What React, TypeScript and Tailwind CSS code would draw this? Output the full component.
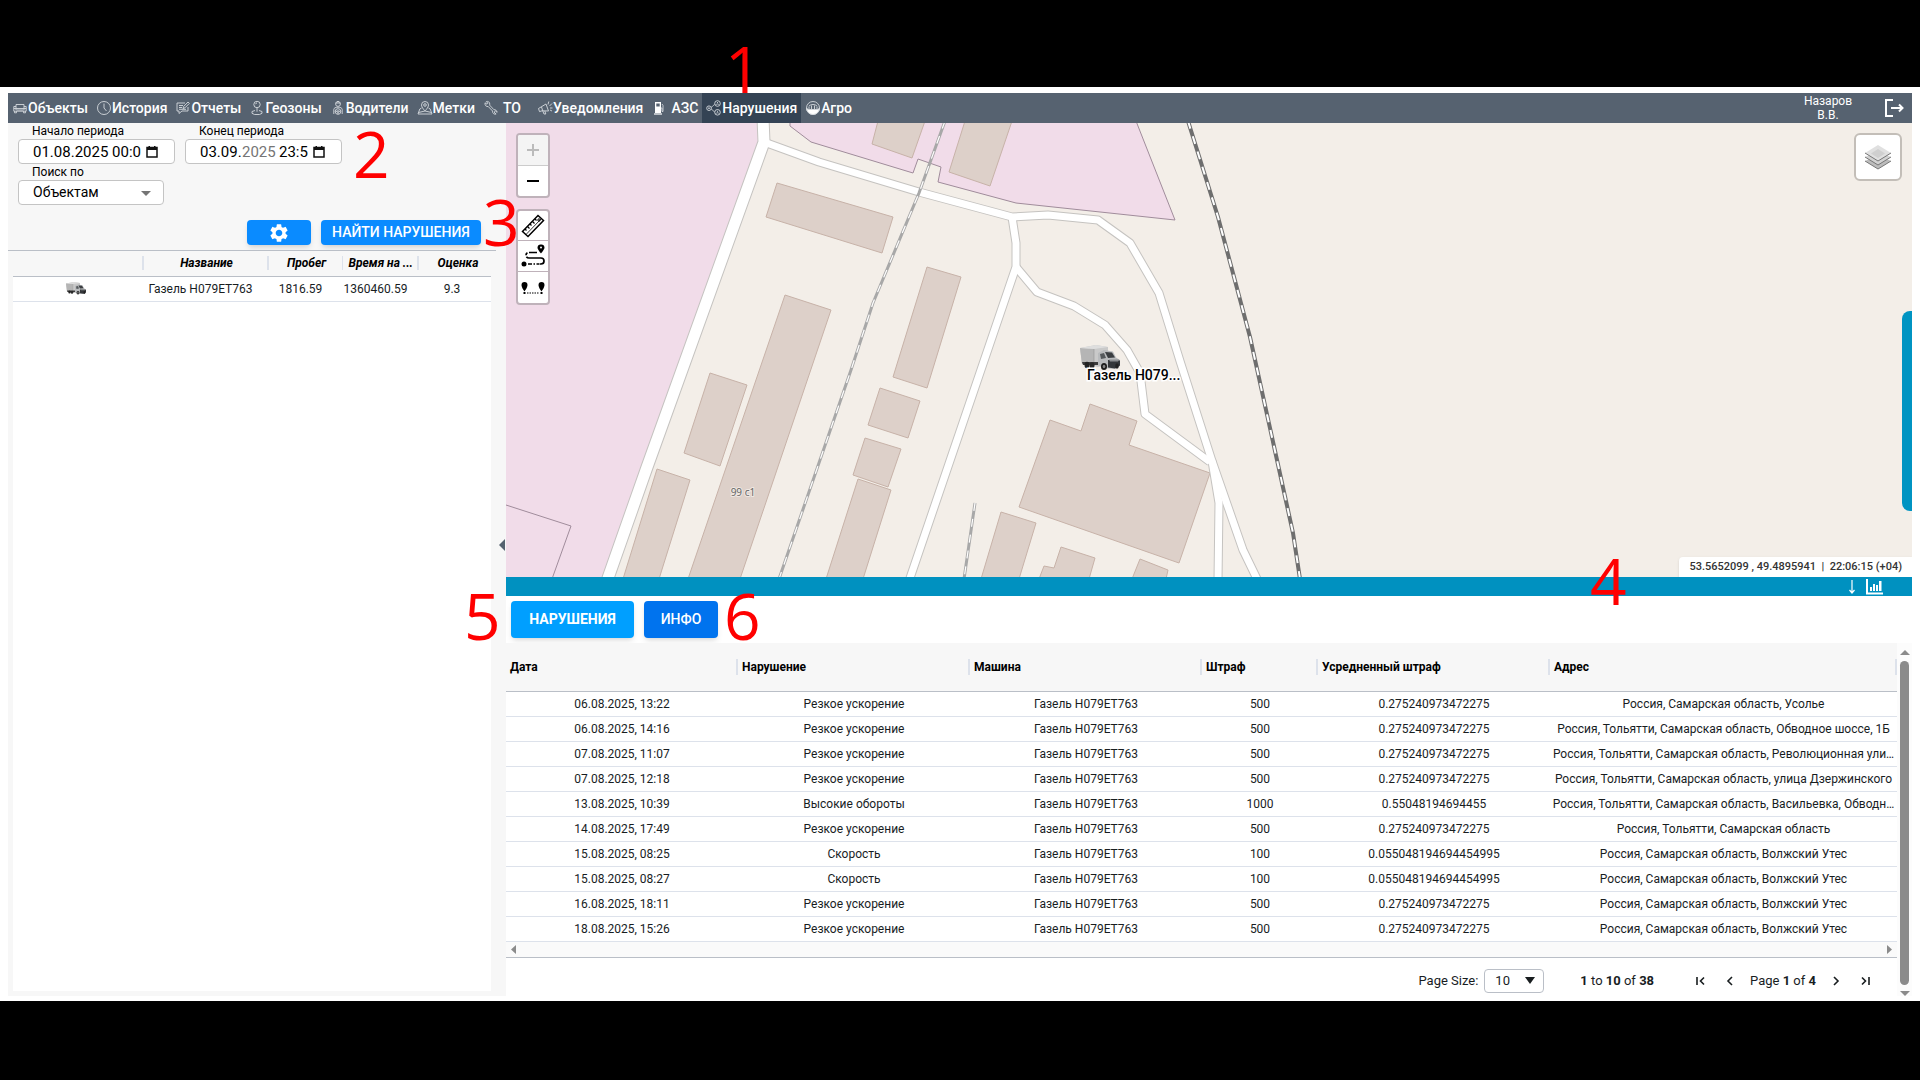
import React from 'react';

const violations = [
  { date: '06.08.2025, 13:22', type: 'Резкое ускорение', fine: '500', avg: '0.275240973472275', address: 'Россия, Самарская область, Усолье' },
  { date: '06.08.2025, 14:16', type: 'Резкое ускорение', fine: '500', avg: '0.275240973472275', address: 'Россия, Тольятти, Самарская область, Обводное шоссе, 1Б' },
  { date: '07.08.2025, 11:07', type: 'Резкое ускорение', fine: '500', avg: '0.275240973472275', address: 'Россия, Тольятти, Самарская область, Революционная ули…' },
  { date: '07.08.2025, 12:18', type: 'Резкое ускорение', fine: '500', avg: '0.275240973472275', address: 'Россия, Тольятти, Самарская область, улица Дзержинского' },
  { date: '13.08.2025, 10:39', type: 'Высокие обороты', fine: '1000', avg: '0.55048194694455', address: 'Россия, Тольятти, Самарская область, Васильевка, Обводн…' },
  { date: '14.08.2025, 17:49', type: 'Резкое ускорение', fine: '500', avg: '0.275240973472275', address: 'Россия, Тольятти, Самарская область' },
  { date: '15.08.2025, 08:25', type: 'Скорость', fine: '100', avg: '0.055048194694454995', address: 'Россия, Самарская область, Волжский Утес' },
  { date: '15.08.2025, 08:27', type: 'Скорость', fine: '100', avg: '0.055048194694454995', address: 'Россия, Самарская область, Волжский Утес' },
  { date: '16.08.2025, 18:11', type: 'Резкое ускорение', fine: '500', avg: '0.275240973472275', address: 'Россия, Самарская область, Волжский Утес' },
  { date: '18.08.2025, 15:26', type: 'Резкое ускорение', fine: '500', avg: '0.275240973472275', address: 'Россия, Самарская область, Волжский Утес' },
];

const columns = [
  { title: 'Дата', width: 'w-[232px]' },
  { title: 'Нарушение', width: 'w-[232px]' },
  { title: 'Машина', width: 'w-[232px]' },
  { title: 'Штраф', width: 'w-[116px]' },
  { title: 'Усредненный штраф', width: 'w-[232px]' },
  { title: 'Адрес', width: '' },
];

const NavIcon = ({ children }: { children: React.ReactNode }) => (
  <svg width="16" height="16" viewBox="0 0 16 16" fill="none" stroke="#d5d9de" strokeWidth="0.9" className="shrink-0" aria-hidden="true">
    {children}
  </svg>
);

const navItems = [
  {
    title: 'Объекты',
    icon: (
      <>
        <path d="M4 8V4.500h8V8M4 8.500h8M4 6.500H1.800v4.700h12.400V6.500H12" />
        <path d="M1.800 8.500H4v1.500M14.200 8.500H12v1.500M2.500 11.200v1.600h2v-1.600M11.500 11.200v1.600h2v-1.600M4.500 10h7" />
      </>
    ),
  },
  {
    title: 'История',
    icon: (
      <>
        <circle cx="8" cy="8" r="6.5" />
        <path d="M8 3.5V8l2.5 3" />
      </>
    ),
  },
  {
    title: 'Отчеты',
    icon: (
      <>
        <path d="M10 3H2v8h2v2.5L7 11h6V7" />
        <path d="M8 8.5l.6-2L13 2l1.4 1.4L10 7.8z" />
        <path d="M4 5.5h4M4 7.5h3M4 9.3h7" />
      </>
    ),
  },
  {
    title: 'Геозоны',
    icon: (
      <>
        <circle cx="8" cy="4.5" r="3.2" />
        <path d="M8 7.7v4M6.5 4.2a1.6 1.6 0 0 1 1.5-1.3" />
        <path d="M6 10.5L3 11.5v1.8l2.5 1.2h5l2.5-1.2v-1.8l-3-1" />
      </>
    ),
  },
  {
    title: 'Водители',
    icon: (
      <>
        <circle cx="8" cy="4" r="2.4" />
        <path d="M5.6 3h4.8M7 1.5h2" />
        <path d="M3.8 14V9.5C3.8 8 5.5 7.2 8 7.2s4.2.8 4.2 2.3V14" />
        <circle cx="8" cy="11.5" r="2.8" />
        <circle cx="8" cy="11.5" r="0.9" />
        <path d="M5.3 11.3h1.8M8.9 11.3h1.8M8 12.4v1.8" />
      </>
    ),
  },
  {
    title: 'Метки',
    icon: (
      <>
        <path d="M8 11S4.500 7.400 4.500 5a3.500 3.500 0 0 1 7 0C11.500 7.400 8 11 8 11z" />
        <circle cx="8" cy="5" r="1.300" />
        <path d="M4.500 8L2.800 9 1 14h14l-1.800-5L11.500 8" />
        <path d="M1.500 12.500L8 11l6.500 1.500" />
      </>
    ),
  },
  {
    title: 'ТО',
    icon: (
      <path d="M2 2.800l2 1.400.800-1-1.400-1.700c1.700-.5 3.400.7 3.400 2.600l-.2 1 4.300 4.600c1.700-.2 3.200 1 3.200 2.700L12.700 11l-1.200.6.1 1.400 1.500 1c-2 .7-3.800-.7-3.500-3L5.200 6.500C3.300 6.900 1.700 5.500 2 2.800z" />
    ),
  },
  {
    title: 'Уведомления',
    icon: (
      <>
        <path d="M1.500 8.500L9 4l2.500 7-6.500-.2-2.500.8z" />
        <path d="M4.500 7l1.300 4 1.200 3h1.800l-1-3" />
        <path d="M11 4.500l.8-3M12.500 6l2.500-2.500M13 8h2.500M13 10l2 1" />
      </>
    ),
  },
  {
    title: 'АЗС',
    icon: (
      <>
        <path d="M4 2h6v11H4z" fill="#fff" stroke="none" />
        <path d="M5.300 3.500h3.400v3H5.300z" fill="#566270" stroke="none" />
        <path d="M3 14h8" stroke="#fff" strokeWidth="1.200" />
        <path d="M10 8h1v3.500h1V5.500L11 4" />
      </>
    ),
  },
  {
    title: 'Нарушения',
    active: true,
    icon: (
      <>
        <circle cx="3" cy="8.200" r="2.300" />
        <circle cx="11.500" cy="3.500" r="2.800" />
        <circle cx="11.500" cy="12.300" r="2.800" />
        <path d="M5.200 7.500c1-.6 1.500-1.800 3.300-3M5.200 9c1 .6 1.500 1.600 3.300 2.700" />
        <path d="M10 4.700c.3-1 2.700-1 3 0M10 13.500c.3-1 2.700-1 3 0M2 9c.3-.8 1.700-.8 2 0" />
        <path d="M11 2.500h1M11 11.300h1M2.500 7.300h1" />
      </>
    ),
  },
  {
    title: 'Агро',
    icon: (
      <>
        <circle cx="8" cy="8" r="6.500" />
        <path d="M1.500 8L3 9.500h10L14.500 8a6.500 6.500 0 0 1-13 0z" fill="#fff" />
        <path d="M4 9V6.500M6.500 9V5.500M9.500 9V5.500M12 9V6.500" />
        <path d="M4 6c2-2 6-2 8 0" />
      </>
    ),
  },
];

const TopNav = () => (
  <header className="flex h-[30px] shrink-0 items-stretch justify-between bg-[#566270] text-white">
    <nav className="flex items-stretch text-[14px] font-medium">
      {navItems.map((item) => (
        <a
          key={item.title}
          href="#"
          className={item.active ? 'flex items-center bg-[#344354] px-1' : 'flex items-center px-1'}
        >
          <NavIcon>{item.icon}</NavIcon>
          <span className={item.title === 'ТО' ? 'pr-2 pl-1' : item.title === 'АЗС' ? 'pl-1' : ''}>{item.title}</span>
        </a>
      ))}
    </nav>
    <div className="flex items-center gap-7 pr-2">
      <div className="w-14 text-center text-[12px] leading-[14px]">Назаров В.В.</div>
      <button type="button" aria-label="Выход">
        <svg width="20" height="20" viewBox="0 0 20 20" fill="none" stroke="#fff" strokeWidth="2">
          <path d="M9 2H2v16h7" />
          <path d="M7 10h11M15 6.500L18.500 10 15 13.500" />
        </svg>
      </button>
    </div>
  </header>
);

const Truck = () => (
  <g>
    <path d="M0 3L16 0l12 2v17l-10 3L2 19z" fill="#c9c9c9" />
    <path d="M0 3l14 1v16L2 19z" fill="#b5b5b5" />
    <path d="M0 3L16 0l12 2-14 2z" fill="#dedede" />
    <path d="M14 4v16" stroke="#969696" strokeWidth="0.600" />
    <path d="M18 8l6-3 9 1.500 3 6 4 2.500v6l-5 3-12-1-5-3z" fill="#b9bbbd" />
    <path d="M25 7l7 .5 3 5-7 .5z" fill="#3b3e41" />
    <path d="M20 9l4-1 2 5-5 1z" fill="#55595c" />
    <path d="M28 15l12 .5v5l-5 3-7-1z" fill="#34373a" />
    <path d="M29 14.500h10l-1 2h-8z" fill="#8b8e90" />
    <path d="M2 17h16v3H3z" fill="#3c3c3c" />
    <ellipse cx="7" cy="20" rx="2.500" ry="3.200" fill="#222" />
    <ellipse cx="12" cy="20.500" rx="2.500" ry="3.200" fill="#2a2a2a" />
    <ellipse cx="24" cy="21.500" rx="3" ry="3.600" fill="#1c1c1c" />
    <ellipse cx="24" cy="21.500" rx="1.300" ry="1.800" fill="#888" />
    <ellipse cx="37" cy="21" rx="1.800" ry="2.800" fill="#222" />
  </g>
);

interface PeriodFieldProps {
  id: string;
  label: string;
  children: React.ReactNode;
}

const PeriodField = ({ id, label, children }: PeriodFieldProps) => (
  <div className="w-[157px]">
    <label htmlFor={id} className="block pl-3.5 text-[12px] leading-4 text-black">
      {label}
    </label>
    <div className="flex h-[25px] items-center rounded border border-[#c4c4c4] bg-white pl-3.5 text-[15px] leading-5 text-black">
      {children}
      <svg width="12" height="14" viewBox="0 0 12 14" className="shrink-0" aria-hidden="true">
        <path d="M1 2.500h10v9.500H1z" fill="none" stroke="#111" strokeWidth="1.500" />
        <path d="M1 2h10v3H1zM2.500 1H4v2H2.500zM8 1h1.500v2H8z" fill="#111" />
      </svg>
    </div>
  </div>
);

const HeadCell = ({ title, width }: { title: string; width: string }) => (
  <th className={`${width} font-bold`}>
    <div className="flex items-center pl-1">
      <span className="h-3.5 w-0.5 bg-[#dde2eb]" />
      <span className="flex-1 pl-1.5 text-center whitespace-nowrap">{title}</span>
    </div>
  </th>
);

const Sidebar = () => (
  <aside className="relative flex w-[498px] shrink-0 flex-col bg-[#f7f7f7]">
    <div className="flex gap-2.5 pl-2.5">
      <PeriodField id="from" label="Начало периода">
        <input id="from" defaultValue="01.08.2025 00:0" className="w-[113px] outline-none" />
      </PeriodField>
      <PeriodField id="to" label="Конец периода">
        <input id="to" defaultValue="03.09." className="w-[42px] outline-none" />
        <input aria-label="Год" defaultValue="2025" className="w-[37px] text-[#757575] outline-none" />
        <input aria-label="Время" defaultValue="23:5" className="w-[34px] outline-none" />
      </PeriodField>
    </div>
    <div className="w-[156px] pl-2.5">
      <label htmlFor="search" className="block pl-3.5 text-[12px] leading-4 text-black">
        Поиск по
      </label>
      <div className="relative">
        <select
          id="search"
          className="block h-[25px] w-full appearance-none rounded border border-[#c4c4c4] bg-white pb-0.5 pl-3.5 text-[14px] leading-5 text-black"
        >
          <option>Объектам</option>
        </select>
        <svg width="10" height="5" viewBox="0 0 10 5" className="pointer-events-none absolute top-[11px] right-[13px]">
          <path d="M0 0h10L5 5z" fill="#757575" />
        </svg>
      </div>
    </div>
    <div className="flex justify-end gap-2.5 pt-[15px] pr-[25px] pb-[5px]">
      <button type="button" aria-label="Настройки" className="flex h-[25px] w-16 items-center justify-center rounded bg-[#0a8bff] shadow-md">
        <svg width="22" height="22" viewBox="0 0 24 24" fill="#fff">
          <path d="M19.140 12.940c.040-.300.060-.610.060-.940 0-.320-.020-.640-.070-.940l2.030-1.580a.490.490 0 0 0 .120-.610l-1.920-3.320a.488.488 0 0 0-.590-.220l-2.390.960c-.500-.380-1.030-.700-1.620-.940l-.360-2.540a.484.484 0 0 0-.480-.410h-3.840c-.240 0-.430.170-.470.410l-.360 2.540c-.590.240-1.130.570-1.620.940l-2.390-.960c-.220-.080-.470 0-.590.220L2.740 8.870c-.120.210-.080.470.120.610l2.030 1.580c-.050.300-.090.630-.090.940s.020.640.070.940l-2.030 1.580a.490.490 0 0 0-.120.610l1.920 3.320c.120.220.370.290.590.220l2.390-.960c.500.380 1.030.700 1.620.940l.360 2.540c.050.240.240.410.480.410h3.840c.240 0 .440-.170.470-.410l.360-2.540c.590-.240 1.130-.560 1.620-.940l2.390.960c.220.080.470 0 .590-.220l1.920-3.320c.120-.220.070-.470-.120-.610l-2.010-1.580zM12 15.600c-1.980 0-3.600-1.620-3.600-3.600s1.620-3.600 3.600-3.600 3.600 1.620 3.600 3.600-1.620 3.600-3.600 3.600z" />
        </svg>
      </button>
      <button type="button" className="h-[25px] w-40 rounded bg-[#0a8bff] pb-0.5 text-[14px] leading-5 font-medium whitespace-nowrap text-white shadow-md">
        НАЙТИ НАРУШЕНИЯ
      </button>
    </div>
    <div className="mr-2.5 mb-[5px] flex flex-1 flex-col border-t border-[#babfc7] pl-[5px]">
      <div className="mr-[5px] flex-1 bg-white">
        <table className="w-full table-fixed border-collapse text-center text-[12px] leading-4 text-[#181d1f]">
          <thead className="bg-[#f7f7f7] text-black italic">
            <tr className="h-[25px] border-b border-[#babfc7]">
              <th className="w-[125px]" aria-label="Иконка" />
              <HeadCell title="Название" width="w-[125px]" />
              <HeadCell title="Пробег" width="w-[75px]" />
              <HeadCell title="Время на ..." width="w-[75px]" />
              <HeadCell title="Оценка" width="w-auto" />
            </tr>
          </thead>
          <tbody>
            <tr className="h-[25px] border-b border-[#dde2eb]">
              <td>
                <svg width="20" height="13" viewBox="0 0 40 26" className="mx-auto">
                  <Truck />
                </svg>
              </td>
              <td>Газель Н079ЕТ763</td>
              <td>1816.59</td>
              <td>1360460.59</td>
              <td>9.3</td>
            </tr>
          </tbody>
        </table>
      </div>
    </div>
    <button type="button" aria-label="Свернуть панель" className="absolute top-[416px] right-px">
      <svg width="6" height="12" viewBox="0 0 6 12">
        <path d="M6 0v12L0 6z" fill="#566270" />
      </svg>
    </button>
  </aside>
);

const buildings = [
  '271,60 387,94 376,130 260,94',
  '372,-2 419,-2 406,35 366,21',
  '459,-2 506,-2 484,63 443,49',
  '279,172 325,187 234,456 182,456',
  '204,250 241,262 214,343 178,330',
  '151,346 184,357 153,456 117,456',
  '421,144 455,154 421,265 387,254',
  '374,265 414,278 402,315 362,302',
  '359,315 395,326 382,364 347,352',
  '352,356 385,367 357,456 320,456',
  '544,297 575,308 584,281 631,298 623,322 704,350 673,440 513,384',
  '495,389 530,400 513,456 475,456',
  '555,424 589,435 583,456 533,456 538,443 548,445',
  '634,436 662,447 660,456 626,456',
];

const wideRoads = ['M257 -5L258 19 140 347 101 458'];
const roads = [
  'M258 19L313 39 413 69 506 94 542 92 592 97 624 120 653 170 674 238 706 338 737 427 752 458',
  'M506 94L510 120 510 144 403 458',
  'M510 144L531 169 568 183 599 202 621 227 634 250 639 291 704 339',
  'M706 338L713 380 712 458',
];
const sidings = ['M439 -2L413 70 367 180 345 247 273 456', 'M469 380L458 456'];
const railway = 'M682 -2L712 94 744 214 771 337 787 410 794 456';

const MapView = () => (
  <svg className="absolute inset-0 h-full w-full" viewBox="0 0 1406 454" preserveAspectRatio="xMidYMid slice">
    <path d="M0 0h1406v454H0z" fill="#f3eee8" />
    <path d="M0 0h258v19L102 454H0z" fill="#f1dce9" />
    <path d="M0 382l65 21-19 53" fill="none" stroke="#a08c9b" />
    <path
      d="M284 -2V3L305 19 407 50 412 36 435 44 432 59 510 80 669 97 630 -2z"
      fill="#f1dce9"
      stroke="#a08c9b"
    />
    {buildings.map((points) => (
      <polygon key={points} points={points} fill="#ddd0c9" stroke="#c7b2a8" />
    ))}
    <g fill="none" strokeLinejoin="round">
      {wideRoads.map((d) => (
        <path key={d} d={d} stroke="#c5c3c0" strokeWidth="13" />
      ))}
      {roads.map((d) => (
        <path key={d} d={d} stroke="#c5c3c0" strokeWidth="9" />
      ))}
      {wideRoads.map((d) => (
        <path key={d} d={d} stroke="#fff" strokeWidth="11" />
      ))}
      {roads.map((d) => (
        <path key={d} d={d} stroke="#fff" strokeWidth="7" />
      ))}
      {sidings.map((d) => (
        <g key={d}>
          <path d={d} stroke="#a8a8a8" strokeWidth="3" />
          <path d={d} stroke="#fff" strokeWidth="1.200" strokeDasharray="8 8" />
        </g>
      ))}
      <path d={railway} stroke="#6e6e6e" strokeWidth="4" />
      <path d={railway} stroke="#fff" strokeWidth="2" strokeDasharray="8 8" />
    </g>
    <text x="237" y="373" textAnchor="middle" className="fill-[#666] font-['Noto_Sans'] text-[10px]" stroke="#efe7e2" strokeWidth="2" paintOrder="stroke">
      99 с1
    </text>
    <g transform="translate(574 222)">
      <Truck />
    </g>
    <text x="581" y="257" className="fill-black text-[14px] font-medium" stroke="#fff" strokeWidth="3" paintOrder="stroke">
      Газель Н079...
    </text>
  </svg>
);

const MapControls = () => (
  <div className="relative flex items-start justify-between p-2.5">
    <div className="flex flex-col gap-[11px]">
      <div className="w-[34px] overflow-hidden rounded border-2 border-[#bfb2ba] bg-white">
        <button type="button" aria-label="Приблизить" className="flex h-[31px] w-full items-center justify-center border-b border-[#ccc] bg-[#f4f4f4]">
          <svg width="14" height="14" viewBox="0 0 14 14" stroke="#bbb" strokeWidth="2">
            <path d="M7 1v12M1 7h12" />
          </svg>
        </button>
        <button type="button" aria-label="Отдалить" className="flex h-[30px] w-full items-center justify-center">
          <svg width="14" height="14" viewBox="0 0 14 14" stroke="#000" strokeWidth="2">
            <path d="M1 7h12" />
          </svg>
        </button>
      </div>
      <div className="w-[34px] divide-y divide-[#bfb2ba] overflow-hidden rounded border-2 border-[#bfb2ba] bg-white">
        <button type="button" aria-label="Линейка" className="flex h-[30px] w-full items-center justify-center">
          <svg width="24" height="24" viewBox="0 0 24 24" fill="none" stroke="#000" strokeWidth="1.500">
            <path d="M1.500 17.500L17 1.500l5.500 5L7 22.500z" />
            <circle cx="18" cy="6" r="1.200" strokeWidth="1" />
            <path d="M4 15l1.500 1.500M6.500 12.500l2 2M9 10l1.500 1.500M11.500 7.500l2 2M14 5l1.500 1.500" strokeWidth="1.200" />
            <path d="M5 20.500L20.500 4.500" strokeWidth="0.800" />
          </svg>
        </button>
        <button type="button" aria-label="Маршрут" className="flex h-[31px] w-full items-center justify-center">
          <svg width="24" height="24" viewBox="0 0 24 24" fill="none" stroke="#000" strokeWidth="1.700">
            <circle cx="3" cy="20" r="2.500" fill="#000" stroke="none" />
            <path d="M20 9.500s-3.500-3.800-3.500-6A3.300 3.300 0 0 1 20 .5a3.300 3.300 0 0 1 3.500 3c0 2.200-3.500 6-3.500 6z" fill="#000" stroke="none" />
            <circle cx="20" cy="3.500" r="1" fill="#fff" stroke="none" />
            <path d="M16 8.500H8c-4 0-4 5.500 0 5.500h4" strokeDasharray="8 1.500 3 1.500" />
            <path d="M12 14h8c4 0 4 6 0 6h-1M7 20h4M12.500 20h1.500M15.500 20h3" />
          </svg>
        </button>
        <button type="button" aria-label="Расстояние" className="flex h-[31px] w-full items-center justify-center">
          <svg width="24" height="24" viewBox="0 0 24 24" fill="#000">
            <path d="M3.500 15.500S.5 11.500.5 9a3 3 0 0 1 6 0c0 2.500-3 6.500-3 6.500zM20.500 15.500s-3-4-3-6.500a3 3 0 0 1 6 0c0 2.500-3 6.500-3 6.500z" />
            <path d="M2.500 16h2v2h-2zM19.500 16h2v2h-2z" />
            <path d="M6 17h12.500" stroke="#000" strokeWidth="1.200" strokeDasharray="1.500 1" />
          </svg>
        </button>
      </div>
    </div>
    <button type="button" aria-label="Слои" className="flex h-12 w-12 items-center justify-center rounded-md border-2 border-[#c3beb8] bg-white">
      <svg width="28" height="28" viewBox="0 0 28 28">
        <path d="M1 18l13 8 13-8-13-6z" fill="#bcbcbc" />
        <path d="M1 18l13 8 13-8" fill="none" stroke="#777" />
        <path d="M1 14l13 8 13-8-13-6z" fill="#d2d2d2" />
        <path d="M1 14l13 8 13-8" fill="none" stroke="#777" />
        <path d="M14 2L27 10 14 18 1 10z" fill="#e0e0e0" />
        <path d="M14 6l7 4.500-7 4.500-7-4.500z" fill="#cfcfcf" />
        <path d="M1 10l13 8 13-8" fill="none" stroke="#777" />
      </svg>
    </button>
  </div>
);

const MapPanel = () => (
  <section className="relative flex-1 overflow-hidden bg-[#f3eee8]">
    <MapView />
    <MapControls />
    <div className="absolute top-[188px] right-0 h-[200px] w-2.5 rounded-l-lg bg-[#0094c2]" />
    <div className="absolute right-0 bottom-0 h-5 rounded-tl bg-white px-2.5 text-[11px] leading-5 font-medium whitespace-pre text-[#333] shadow">
      {'53.5652099 , 49.4895941  |  22:06:15 (+04)'}
    </div>
  </section>
);

const ViolationsGrid = () => (
  <div className="min-w-0 flex-1">
    <table className="w-full table-fixed border-collapse text-center text-[12px] leading-4 text-[#181d1f]">
      <thead className="bg-[#f7f7f7] text-left text-black">
        <tr className="h-12 border-b border-[#babfc7]">
          {columns.map((col, i) => (
            <th key={col.title} className={`${col.width} font-bold`}>
              <div className={i === columns.length - 1 ? 'flex h-4 justify-between border-r-2 border-[#dde2eb]' : 'flex h-4'}>
                <span className={i === 0 ? 'pl-1' : '-ml-0.5 border-l-2 border-[#dde2eb] pl-1'}>{col.title}</span>
              </div>
            </th>
          ))}
        </tr>
      </thead>
      <tbody>
        {violations.map((v) => (
          <tr key={v.date} className="h-[25px] border-b border-[#dde2eb]">
            <td>{v.date}</td>
            <td>{v.type}</td>
            <td>Газель Н079ЕТ763</td>
            <td>{v.fine}</td>
            <td>{v.avg}</td>
            <td className="whitespace-nowrap">{v.address}</td>
          </tr>
        ))}
      </tbody>
    </table>
    <div className="flex h-4 items-center justify-between border-b border-[#babfc7] bg-[#fafafa] px-[5px]">
      <svg width="5" height="9" viewBox="0 0 5 9">
        <path d="M5 0v9L0 4.500z" fill="#8b8b8b" />
      </svg>
      <svg width="5" height="9" viewBox="0 0 5 9">
        <path d="M0 0v9l5-4.500z" fill="#8b8b8b" />
      </svg>
    </div>
    <Pagination />
  </div>
);

const PageButton = ({ label, d }: { label: string; d: string }) => (
  <button type="button" aria-label={label}>
    <svg width="12" height="12" viewBox="0 0 12 12" fill="none" stroke="#181d1f" strokeWidth="1.600">
      <path d={d} />
    </svg>
  </button>
);

const Pagination = () => (
  <div className="flex items-center justify-end pt-[11px] pr-[25px] text-[13px] leading-4 text-[#181d1f]">
    <label htmlFor="page-size">Page Size:</label>
    <div className="relative mr-9 ml-1.5">
      <select id="page-size" className="block h-6 w-[60px] appearance-none rounded border border-[#babfc7] bg-white pl-2.5 leading-4">
        <option>10</option>
      </select>
      <svg width="10" height="7" viewBox="0 0 10 7" className="pointer-events-none absolute top-2 right-[9px]">
        <path d="M0 0h10L5 7z" fill="#181d1f" />
      </svg>
    </div>
    <span className="mr-10">
      <b>1</b> to <b>10</b> of <b>38</b>
    </span>
    <div className="flex items-center gap-[18px]">
      <PageButton label="Первая страница" d="M3 2v8M10 2.500L6.500 6 10 9.500" />
      <PageButton label="Предыдущая страница" d="M8 2L4 6l4 4" />
      <span className="-mx-1">
        Page <b>1</b> of <b>4</b>
      </span>
      <PageButton label="Следующая страница" d="M4 2l4 4-4 4" />
      <PageButton label="Последняя страница" d="M2 2.500L5.500 6 2 9.500M9 2v8" />
    </div>
  </div>
);

const DataPanel = () => (
  <section className="flex h-[419px] shrink-0 flex-col bg-white">
    <div className="flex h-[19px] shrink-0 items-center justify-end gap-2.5 bg-[#0091c0] pr-[29px] text-white">
      <svg width="8" height="14" viewBox="0 0 8 14" fill="none" stroke="#fff" strokeWidth="1.200">
        <path d="M4 0v13M1.500 10L4 13l2.500-3" />
      </svg>
      <svg width="17" height="16" viewBox="0 0 17 16" fill="#fff">
        <path d="M0 0h2v13.500h15v2H0z" />
        <path d="M4 8h2v4H4zM7 5h2v7H7zM10 6h2v6h-2zM13 2h2.500v10H13z" />
      </svg>
    </div>
    <div className="flex h-[47px] shrink-0 items-start gap-2.5 px-[5px] pt-[5px]">
      <button type="button" className="h-[37px] w-[123px] rounded bg-[#009fff] pb-0.5 text-[14px] leading-5 font-bold text-white shadow-md">
        НАРУШЕНИЯ
      </button>
      <button type="button" className="h-[37px] w-[74px] rounded bg-[#0073ee] pb-0.5 text-[14px] leading-5 font-medium text-white shadow-md">
        ИНФО
      </button>
    </div>
    <div className="flex flex-1">
      <ViolationsGrid />
      <div className="flex w-[15px] flex-col items-center gap-1.5 bg-[#fcfcfc] pt-[7px]">
        <svg width="10" height="5" viewBox="0 0 10 5">
          <path d="M0 5h10L5 0z" fill="#8b8b8b" />
        </svg>
        <div className="w-[9px] flex-1 rounded-full bg-[#8b8b8b]" />
        <svg width="10" height="5" viewBox="0 0 10 5">
          <path d="M0 0h10L5 5z" fill="#8b8b8b" />
        </svg>
      </div>
    </div>
  </section>
);

// numbered callouts drawn on top of the interface
const callouts = [
  { n: 1, place: 'top-[45px] left-[725px]' },
  { n: 2, place: 'top-[130px] left-[353px]' },
  { n: 3, place: 'top-[198px] left-[483px]' },
  { n: 4, place: 'top-[557px] left-[1590px]' },
  { n: 5, place: 'top-[592px] left-[464px]' },
  { n: 6, place: 'top-[592px] left-[724px]' },
];

export default function App() {
  return (
    <div className="relative flex h-screen flex-col bg-black pt-[87px] pb-[79px] font-['Roboto',sans-serif]">
      <div className="flex flex-1 flex-col bg-white px-2 pt-1.5">
        <TopNav />
        <div className="flex flex-1">
          <div className="flex pb-[5px]">
            <Sidebar />
          </div>
          <main className="flex min-w-0 flex-1 flex-col pb-[5px]">
            <MapPanel />
            <DataPanel />
          </main>
        </div>
      </div>
      {callouts.map((c) => (
        <span key={c.n} className={`${c.place} absolute font-['Open_Sans'] text-[64px] leading-[48px] text-[#ff0000]`}>
          {c.n}
        </span>
      ))}
    </div>
  );
}
